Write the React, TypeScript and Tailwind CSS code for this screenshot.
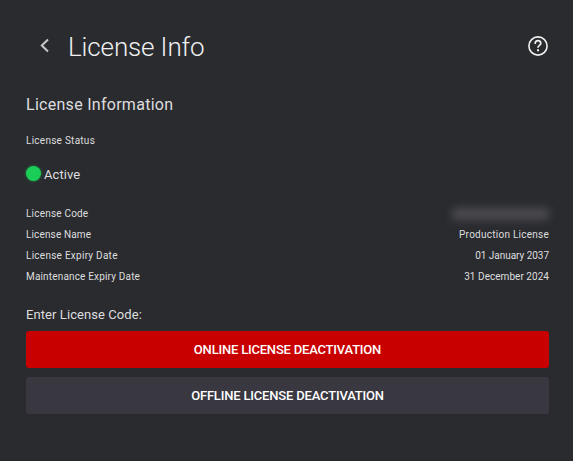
import type { ReactNode } from "react";

const details = [
  { label: "License Name", value: "Production License", labelClass: "tracking-[0.14px]", valueClass: "tracking-[0.25px]" },
  { label: "License Expiry Date", value: "01 January 2037", labelClass: "tracking-[0.26px]", valueClass: "tracking-[-0.03px]" },
  { label: "Maintenance Expiry Date", value: "31 December 2024", labelClass: "tracking-[0.17px]", valueClass: "tracking-[0.04px]" },
];

function Row({ label, labelClass, children }: { label: string; labelClass: string; children: ReactNode }) {
  return (
    <div className="flex h-[21px] items-center justify-between">
      <span className={labelClass}>{label}</span>
      {children}
    </div>
  );
}

export default function App() {
  return (
    <main className="h-[461px] w-[573px] overflow-hidden bg-[#2a2b2f] px-6 pl-[26px] font-['Roboto','Liberation_Sans',sans-serif] text-[#dededf]">
      <header className="flex h-[92px] items-center">
        <button aria-label="Back" className="ml-3 flex w-[30px]">
          <svg width="14" height="16" viewBox="0 0 14 16" fill="none" stroke="#c9c9cb" strokeWidth="2">
            <path d="M10 1.5 3.8 7.5 10 13.5" />
          </svg>
        </button>
        <h1 className="pt-0.5 text-[26px] font-light tracking-[-0.13px] text-[#f0f0f1]">License Info</h1>
        <button aria-label="Help" className="ml-auto">
          <svg width="22" height="22" viewBox="0 0 22 22" fill="none" stroke="#f0f0f0" strokeWidth="1.6">
            <circle cx="11" cy="11" r="9.1" />
            <path d="M8.2 9V8.4a2.8 2.8 0 0 1 5.6 0c0 2-2.8 2.1-2.8 4.3" strokeWidth="1.7" />
            <path d="M11 14.3v2" strokeWidth="2" />
          </svg>
        </button>
      </header>
      <h2 className="mt-px h-6 text-[16px] leading-6 tracking-[0.28px]">License Information</h2>
      <p className="mt-4 h-4 text-[10px] leading-4 tracking-[0.26px]">License Status</p>
      <div className="mt-[14px] flex h-5 items-center text-[13px]">
        <span className="mr-[3px] size-[15px] rounded-full bg-[#1acd56] shadow-[0_0_3px_#1acd5699]" />
        <span className="pt-[3px] tracking-[0.05px]">Active</span>
      </div>
      <section className="mt-[20px] text-[10px]">
        <Row label="License Code" labelClass="tracking-[0.2px]">
          <span className="h-[12px] w-[97px] rounded-sm bg-[#4b4b50] blur-[4px]" />
        </Row>
        {details.map((item) => (
          <Row key={item.label} label={item.label} labelClass={item.labelClass}>
            <span className={item.valueClass}>{item.value}</span>
          </Row>
        ))}
      </section>
      <p className="mt-[18px] h-5 text-[13px] leading-5 tracking-[0.08px]">Enter License Code:</p>
      <div className="mt-[6px] flex flex-col gap-[9px] text-[13px] font-medium text-white">
        <button className="h-[37px] rounded-[3px] bg-[#c80000] tracking-[-0.2px]">ONLINE LICENSE DEACTIVATION</button>
        <button className="h-[37px] rounded-[3px] bg-[#393740] tracking-[-0.18px]">OFFLINE LICENSE DEACTIVATION</button>
      </div>
    </main>
  );
}
